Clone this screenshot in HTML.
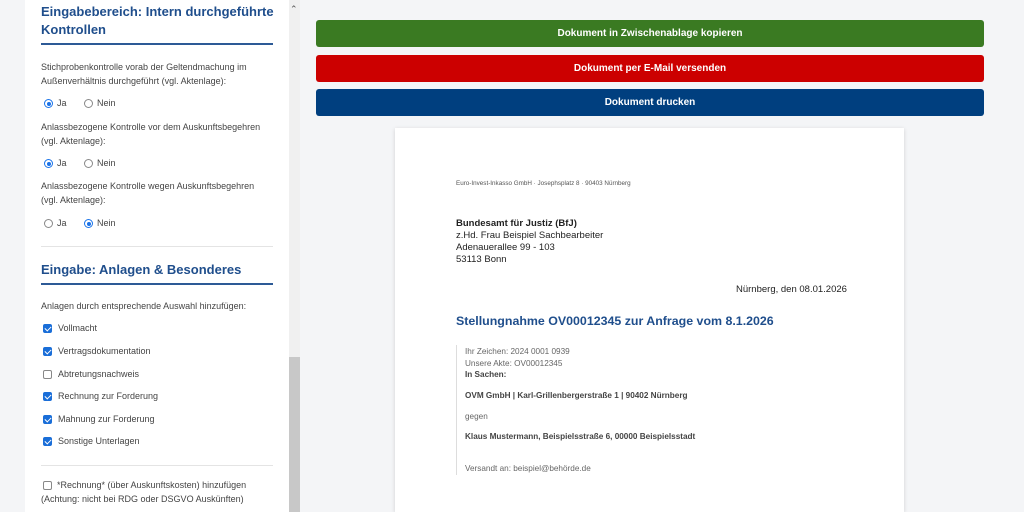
<!DOCTYPE html>
<html><head><meta charset="utf-8"><style>
*{margin:0;padding:0;box-sizing:border-box}
html{overflow:hidden;height:512px}
body{width:1024px;height:512px;overflow:hidden;background:#f4f5f7;font-family:"Liberation Sans",sans-serif;position:relative}
.a{position:absolute;white-space:nowrap}
.panel{position:absolute;left:25px;top:0;width:264px;height:512px;background:#fff}
.sb{position:absolute;left:289px;top:0;width:11px;height:512px;background:#f0f0f0}
.thumb{position:absolute;left:289px;top:357px;width:11px;height:155px;background:#c8c8c8}
h2{position:absolute;left:41px;font-size:13px;color:#1f4e8c;font-weight:bold;line-height:18px}
.line{position:absolute;left:41px;width:232px;height:2px;background:#2d5a96}
.hr{position:absolute;left:41px;width:232px;height:1px;background:#e4e4e4}
.t{position:absolute;left:41px;font-size:9px;color:#444;line-height:13.5px;white-space:nowrap}
.r{position:absolute;width:9px;height:9px;border-radius:50%;border:1px solid #888;background:#fff}
.r.on{border-color:#1a73e8}.r.on::after{content:"";position:absolute;left:1.5px;top:1.5px;width:4px;height:4px;border-radius:50%;background:#1a73e8}
.c{position:absolute;left:43px;width:9px;height:9px;border-radius:2px;border:1px solid #888;background:#fff}
.c.on{background:#1a6ed8;border-color:#1a6ed8}
.c.on::after{content:"";position:absolute;left:2px;top:0px;width:3px;height:5px;border:solid #fff;border-width:0 1.5px 1.5px 0;transform:rotate(45deg)}
.btn{position:absolute;left:316px;width:668px;height:27px;border-radius:3px;color:#fff;font-weight:bold;font-size:10px;text-align:center;line-height:27px}
.paper{position:absolute;left:395px;top:128px;width:509px;height:384px;background:#fff;box-shadow:0 1px 4px rgba(0,0,0,.15)}
.p{position:absolute;font-size:9.5px;color:#222;white-space:nowrap}
.g{position:absolute;font-size:8.2px;color:#666;white-space:nowrap}
</style></head><body>
<div class="panel"></div><div class="sb"></div><div class="thumb"></div>
<div class="a" style="left:290px;top:4px;font-size:9px;color:#555">&#8963;</div>
<h2 style="top:3px">Eingabebereich: Intern durchgeführte</h2>
<h2 style="top:21px">Kontrollen</h2>
<div class="line" style="top:43px"></div>
<div class="t" style="top:61px">Stichprobenkontrolle vorab der Geltendmachung im<br>Außenverhältnis durchgeführt (vgl. Aktenlage):</div>
<div class="r on" style="left:44px;top:99px"></div><div class="t" style="left:57px;top:97px">Ja</div>
<div class="r" style="left:84px;top:99px"></div><div class="t" style="left:97px;top:97px">Nein</div>
<div class="t" style="top:121px">Anlassbezogene Kontrolle vor dem Auskunftsbegehren<br>(vgl. Aktenlage):</div>
<div class="r on" style="left:44px;top:159px"></div><div class="t" style="left:57px;top:157px">Ja</div>
<div class="r" style="left:84px;top:159px"></div><div class="t" style="left:97px;top:157px">Nein</div>
<div class="t" style="top:180px">Anlassbezogene Kontrolle wegen Auskunftsbegehren<br>(vgl. Aktenlage):</div>
<div class="r" style="left:44px;top:219px"></div><div class="t" style="left:57px;top:217px">Ja</div>
<div class="r on" style="left:84px;top:219px"></div><div class="t" style="left:97px;top:217px">Nein</div>
<div class="hr" style="top:246px"></div>
<h2 style="top:261px">Eingabe: Anlagen &amp; Besonderes</h2>
<div class="line" style="top:283px"></div>
<div class="t" style="top:300px">Anlagen durch entsprechende Auswahl hinzufügen:</div>
<div class="c on" style="top:324px"></div><div class="t" style="left:58px;top:322px">Vollmacht</div>
<div class="c on" style="top:347px"></div><div class="t" style="left:58px;top:345px">Vertragsdokumentation</div>
<div class="c" style="top:370px"></div><div class="t" style="left:58px;top:368px">Abtretungsnachweis</div>
<div class="c on" style="top:392px"></div><div class="t" style="left:58px;top:390px">Rechnung zur Forderung</div>
<div class="c on" style="top:415px"></div><div class="t" style="left:58px;top:413px">Mahnung zur Forderung</div>
<div class="c on" style="top:437px"></div><div class="t" style="left:58px;top:435px">Sonstige Unterlagen</div>
<div class="hr" style="top:465px"></div>
<div class="c" style="top:481px"></div><div class="t" style="left:57px;top:479px">*Rechnung* (über Auskunftskosten) hinzufügen</div>
<div class="t" style="top:493px">(Achtung: nicht bei RDG oder DSGVO Auskünften)</div>

<div class="btn" style="top:20px;background:#3a7a22">Dokument in Zwischenablage kopieren</div>
<div class="btn" style="top:55px;background:#cc0000">Dokument per E-Mail versenden</div>
<div class="btn" style="top:89px;background:#003f7f">Dokument drucken</div>

<div class="paper"></div>
<div class="a" style="left:456px;top:180px;font-size:6.3px;color:#555">Euro-Invest-Inkasso GmbH · Josephsplatz 8 · 90403 Nürnberg</div>
<div class="p" style="left:456px;top:218px;font-weight:bold">Bundesamt für Justiz (BfJ)</div>
<div class="p" style="left:456px;top:230px">z.Hd. Frau Beispiel Sachbearbeiter</div>
<div class="p" style="left:456px;top:242px">Adenauerallee 99 - 103</div>
<div class="p" style="left:456px;top:254px">53113 Bonn</div>
<div class="p" style="left:736px;top:284px">Nürnberg, den 08.01.2026</div>
<div class="a" style="left:456px;top:314px;font-size:12.4px;font-weight:bold;color:#1f4e8c">Stellungnahme OV00012345 zur Anfrage vom 8.1.2026</div>
<div class="a" style="left:456px;top:345px;width:1px;height:130px;background:#ddd"></div>
<div class="g" style="left:465px;top:347px">Ihr Zeichen: 2024 0001 0939</div>
<div class="g" style="left:465px;top:359px">Unsere Akte: OV00012345</div>
<div class="g" style="left:465px;top:370px;font-weight:bold;color:#444">In Sachen:</div>
<div class="g" style="left:465px;top:391px;font-weight:bold;color:#444">OVM GmbH | Karl-Grillenbergerstraße 1 | 90402 Nürnberg</div>
<div class="g" style="left:465px;top:412px">gegen</div>
<div class="g" style="left:465px;top:432px;font-weight:bold;color:#444">Klaus Mustermann, Beispielsstraße 6, 00000 Beispielsstadt</div>
<div class="g" style="left:465px;top:464px">Versandt an: beispiel@behörde.de</div>
</body></html>
